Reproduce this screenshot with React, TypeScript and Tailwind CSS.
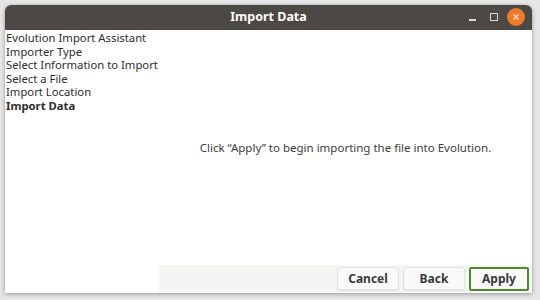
export default function App() {
  const steps = [
    "Evolution Import Assistant",
    "Importer Type",
    "Select Information to Import",
    "Select a File",
    "Import Location",
  ];
  return (
    <div
      className="w-[540px] h-[300px] bg-[#e6e6e6] relative overflow-hidden"
      style={{ fontFamily: '"Noto Sans", "Open Sans", sans-serif' }}
    >
      <div className="absolute left-[5px] top-[5px] w-[527px] h-[288px] flex flex-col bg-white rounded-t-[6px] shadow-[0_1px_4px_rgba(0,0,0,0.35)]">
        <div className="h-[25px] bg-[#4c4843] rounded-t-[6px] flex items-center relative shrink-0">
          <div className="flex-1 text-center text-white font-bold text-[12.5px]">Import Data</div>
          <div className="absolute right-[5px] top-[3px] flex items-center gap-[0px]">
            <div className="w-[22px] h-[18px] flex items-center justify-center">
              <div className="w-[7px] h-[1.5px] bg-[#dcdcdc] mt-[6px]" />
            </div>
            <div className="w-[22px] h-[18px] flex items-center justify-center">
              <div className="w-[8px] h-[8px] border border-[#dcdcdc]" />
            </div>
            <div className="w-[22px] h-[18px] flex items-center justify-center">
              <div className="w-[18px] h-[18px] rounded-full bg-[#ef7a2c] flex items-center justify-center">
                <svg width="8" height="8" viewBox="0 0 8 8">
                  <path d="M1.5 1.5 L6.5 6.5 M6.5 1.5 L1.5 6.5" stroke="#fde2cc" strokeWidth="1.3" />
                </svg>
              </div>
            </div>
          </div>
        </div>
        <div className="flex flex-1 min-h-0">
          <div className="w-[154px] pl-[1px] pt-[1px] text-[11.3px] leading-[13.5px] text-[#2d2d2d] whitespace-nowrap">
            {steps.map((s) => (
              <div key={s}>{s}</div>
            ))}
            <div className="font-bold">Import Data</div>
          </div>
          <div className="flex-1 flex flex-col">
            <div className="flex-1 flex items-center justify-center text-[11.5px] text-[#3c3c3c] pt-[1px]">
              Click “Apply” to begin importing the file into Evolution.
            </div>
            <div className="h-[28px] bg-[#f5f5f4] flex items-center justify-end gap-[4px] pr-[3px] pb-[1px]">
              <button className="w-[62px] h-[23px] rounded-[3px] bg-[#f9f9f9] border border-[#e2e2e0] shadow-[0_1px_1px_rgba(0,0,0,0.08)] text-[12px] font-bold text-[#3a3a3a]">
                Cancel
              </button>
              <button className="w-[62px] h-[23px] rounded-[3px] bg-[#f9f9f9] border border-[#e2e2e0] shadow-[0_1px_1px_rgba(0,0,0,0.08)] text-[12px] font-bold text-[#3a3a3a]">
                Back
              </button>
              <button className="w-[60px] h-[24px] rounded-[2px] bg-[#f9f9f9] border-2 border-[#4e8a2b] text-[12px] font-bold text-[#3a3a3a]">
                Apply
              </button>
            </div>
          </div>
        </div>
      </div>
    </div>
  );
}
